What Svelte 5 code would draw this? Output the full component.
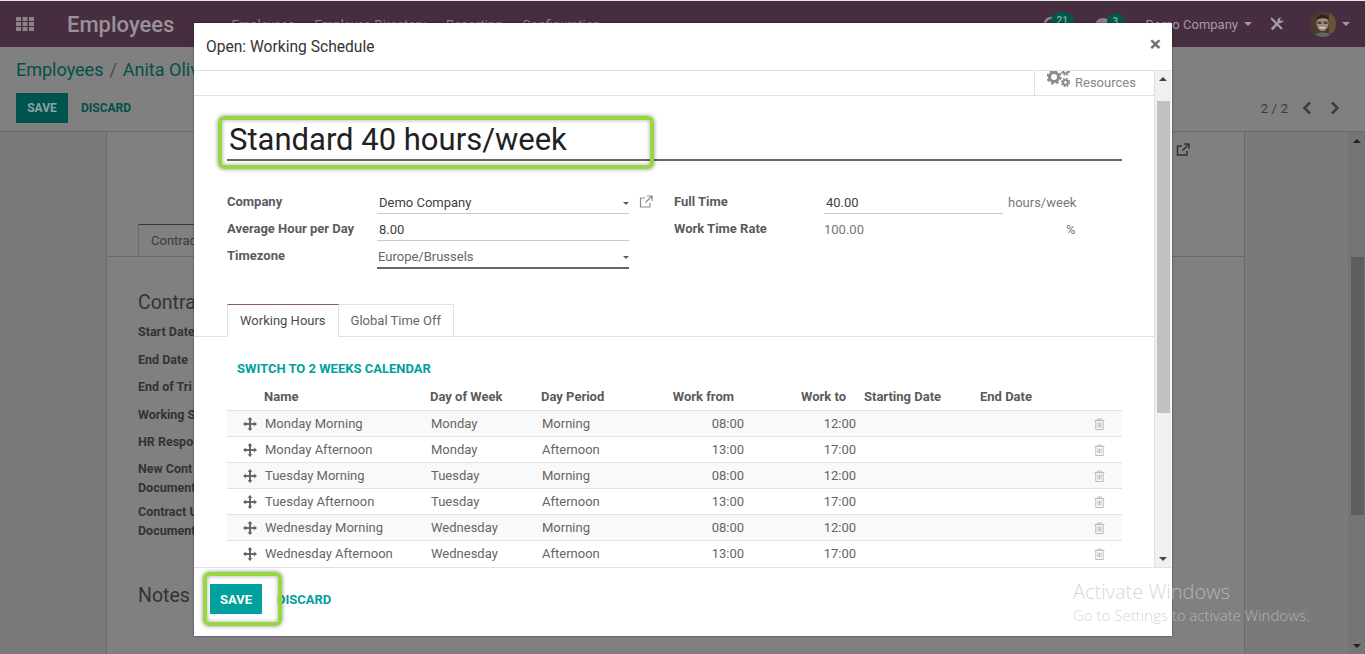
<script lang="ts">
	const rows = [
		['Monday Morning', 'Monday', 'Morning', '08:00', '12:00'],
		['Monday Afternoon', 'Monday', 'Afternoon', '13:00', '17:00'],
		['Tuesday Morning', 'Tuesday', 'Morning', '08:00', '12:00'],
		['Tuesday Afternoon', 'Tuesday', 'Afternoon', '13:00', '17:00'],
		['Wednesday Morning', 'Wednesday', 'Morning', '08:00', '12:00'],
		['Wednesday Afternoon', 'Wednesday', 'Afternoon', '13:00', '17:00']
	]
	const bgLabels = [
		['Start Date'],
		['End Date'],
		['End of Tri'],
		['Working S'],
		['HR Respo'],
		['New Cont', 'Document'],
		['Contract U', 'Document']
	]
	const menu = ['Employees', 'Employee Directory', 'Reporting', 'Configuration']
</script>

<div class="page">
	<header class="navbar">
		<svg class="apps" width="18" height="14" viewBox="0 0 18 14">
			<path d="M0 0h5v4H0zM6.500 0h5v4h-5zM13 0h5v4h-5zM0 5h5v4H0zM6.500 5h5v4h-5zM13 5h5v4h-5zM0 10h5v4H0zM6.500 10h5v4h-5zM13 10h5v4h-5z" fill="#8d8289" />
		</svg>
		<span class="brand">Employees</span>
		<nav class="menu">
			{#each menu as item}
				<span>{item}</span>
			{/each}
		</nav>
		<div class="systray">
			<span class="tray-icon">
				<svg width="14" height="16" viewBox="0 0 14 16"><circle cx="8" cy="8" r="6" fill="none" stroke="#8d8289" stroke-width="2.500" /></svg>
				<b class="badge one">21</b>
			</span>
			<span class="tray-icon chat">
				<svg width="16" height="14" viewBox="0 0 16 14"><ellipse cx="8" cy="7" rx="7.500" ry="6" fill="#8d8289" /></svg>
				<b class="badge two">3</b>
			</span>
			<span class="company">Demo Company <i class="caret"></i></span>
			<svg class="tools" width="14" height="14" viewBox="0 0 14 14">
				<path d="M5 6.500 1.500 3 .5 1.500 1.500.5 3 1.500 6.500 5 12.800 11.200 11.200 12.800z" fill="#a69ea3" />
				<path d="M.8 11.500 7.500 4.800C7 3 8 .8 10.500.5l1 .1-2 2 1.900 1.900 2-2c.3 2.300-1.800 4-3.900 3.400L2.700 13.200z" fill="#a69ea3" />
			</svg>
			<svg class="avatar" width="26" height="26" viewBox="0 0 26 26">
				<defs><clipPath id="av"><circle cx="13" cy="13" r="13" /></clipPath></defs>
				<g clip-path="url(#av)">
					<rect width="26" height="26" fill="#4a3c2c" />
					<path d="M19 0h7v22h-7z" fill="#6a5238" />
					<ellipse cx="12.500" cy="12.500" rx="6" ry="7.500" fill="#a08b7c" />
					<path d="M6.500 9C6 3 18.500 2 19 9 16 6.500 10 6.500 6.500 9z" fill="#2a2420" />
					<path d="M7.500 10.500h4v2.500h-4zM13.500 10.500h4v2.500h-4z" fill="#4a4540" />
					<path d="M9.500 16h6v1.500h-6z" fill="#d8cfc8" />
					<path d="M3 26c1-6 18-6 20 0z" fill="#5f6468" />
				</g>
			</svg>
			<i class="caret light"></i>
		</div>
	</header>

	<section class="control">
		<div class="breadcrumb"><span>Employees</span> <em>/</em> <span>Anita Oliver</span></div>
		<div class="control-row">
			<div class="bg-buttons">
				<button class="bg-save">SAVE</button>
				<span class="bg-discard">DISCARD</span>
			</div>
			<div class="pager">
				<span>2 / 2</span>
				<svg width="10" height="14" viewBox="0 0 10 14"><path d="M8 1.500 2.500 7 8 12.500" fill="none" stroke="#3f3f3f" stroke-width="2.600" /></svg>
				<svg width="10" height="14" viewBox="0 0 10 14"><path d="M2 1.500 7.500 7 2 12.500" fill="none" stroke="#3f3f3f" stroke-width="2.600" /></svg>
			</div>
		</div>
	</section>

	<main class="content">
		<div class="sheet">
			<div class="sheet-top">
				<svg class="bg-ext" width="14" height="14" viewBox="0 0 14 14"><path d="M11 8v4H1.500V3H6M8 1h5v5M13 1 6.500 7.500" fill="none" stroke="#333" stroke-width="1.500" /></svg>
			</div>
			<div class="bg-tabs"><span class="bg-tab">Contract</span></div>
			<div class="bg-form">
				<h3>Contract</h3>
				{#each bgLabels as lines}
					<div class="bg-label" class:multi={lines.length > 1}>
						{#each lines as l}<div>{l}</div>{/each}
					</div>
				{/each}
				<h3 class="notes">Notes</h3>
			</div>
		</div>
		<div class="page-scroll">
			<i class="arrow up"></i>
			<div class="page-track"><div class="page-thumb"></div></div>
			<i class="arrow down"></i>
		</div>
	</main>
</div>

<div class="modal">
	<div class="modal-head">
		<span>Open: Working Schedule</span>
		<span class="close">×</span>
	</div>
	<div class="modal-body">
		<div class="scroll-pane">
			<div class="button-box">
				<div class="stat">
					<svg class="gears" width="24" height="18" viewBox="0 0 24 18">
						<g fill="none" stroke="#8a8a8a">
							<circle cx="7" cy="6" r="4.500" stroke-width="3" />
							<circle cx="7" cy="6" r="6.500" stroke-width="2.200" stroke-dasharray="2.600 2.500" />
							<circle cx="18.500" cy="11.500" r="2.400" stroke-width="2" />
							<circle cx="18.500" cy="11.500" r="4" stroke-width="1.400" stroke-dasharray="1.700 1.450" />
							<circle cx="18.500" cy="0" r="2.400" stroke-width="2" />
							<circle cx="18.500" cy="0" r="4" stroke-width="1.400" stroke-dasharray="1.700 1.450" />
						</g>
					</svg>
					<span>Resources</span>
				</div>
			</div>
			<div class="form-body">
				<div class="title-field">Standard 40 hours/week</div>
				<div class="fields">
					<div class="field-col left">
						<div class="field-row">
							<span class="lbl">Company</span>
							<div class="val line">Demo Company <i class="caret dark"></i></div>
							<svg class="ext" width="14" height="14" viewBox="0 0 14 14"><path d="M11 8v4H1.500V3H6M8 1h5v5M13 1 6.500 7.500" fill="none" stroke="#8a8a8a" stroke-width="1.200" /></svg>
						</div>
						<div class="field-row">
							<span class="lbl">Average Hour per Day</span>
							<div class="val line">8.00</div>
						</div>
						<div class="field-row">
							<span class="lbl">Timezone</span>
							<div class="val focus">Europe/Brussels <i class="caret dark"></i></div>
						</div>
					</div>
					<div class="field-col right">
						<div class="field-row">
							<span class="lbl">Full Time</span>
							<div class="val line short">40.00</div>
							<span class="unit">hours/week</span>
						</div>
						<div class="field-row">
							<span class="lbl">Work Time Rate</span>
							<div class="val short muted">100.00</div>
							<span class="unit pct">%</span>
						</div>
					</div>
				</div>
				<div class="tabs">
					<span class="tab active">Working Hours</span>
					<span class="tab">Global Time Off</span>
				</div>
				<div class="tab-pane">
					<div class="switch">SWITCH TO 2 WEEKS CALENDAR</div>
					<div class="grid head">
						<span></span><span>Name</span><span>Day of Week</span><span>Day Period</span>
						<span class="r">Work from</span><span class="r">Work to</span><span class="start">Starting Date</span><span class="end">End Date</span><span></span>
					</div>
					{#each rows as row, i}
						<div class="grid row" class:odd={i % 2 === 0}>
							<svg class="move" width="14" height="14" viewBox="0 0 14 14">
								<path d="M7 0 9.500 2.800H8V6h3.200V4.500L14 7l-2.800 2.500V8H8v3.200h1.500L7 14l-2.500-2.800H6V8H2.800v1.500L0 7l2.800-2.500V6H6V2.800H4.500z" fill="#666" />
							</svg>
							<span>{row[0]}</span>
							<span>{row[1]}</span>
							<span>{row[2]}</span>
							<span class="r">{row[3]}</span>
							<span class="r">{row[4]}</span>
							<span></span>
							<span></span>
							<svg class="trash" width="11" height="12" viewBox="0 0 11 12">
								<path d="M.5 2.500h10M3.500 2.500V1h4v1.500M1.800 2.500v9h7.400v-9M4 4.500v5M5.500 4.500v5M7 4.500v5" fill="none" stroke="#b7bcc2" stroke-width="1" />
							</svg>
						</div>
					{/each}
				</div>
			</div>
		</div>
		<div class="modal-scroll">
			<i class="arrow up dark-arrow"></i>
			<div class="modal-track"><div class="modal-thumb"></div></div>
			<i class="arrow down dark-arrow"></i>
		</div>
	</div>
	<div class="modal-foot">
		<button class="save">SAVE</button>
		<span class="discard">DISCARD</span>
	</div>
</div>

<div class="mark mark-title"></div>
<div class="mark mark-save"></div>

<div class="watermark">
	<div class="wm-big">Activate Windows</div>
	<div class="wm-small">Go to Settings to activate Windows.</div>
</div>

<style>
	:global(body) {
		margin: 0;
		background: #808080;
		overflow: hidden;
		font-family: Roboto, 'Noto Sans', sans-serif;
	}

	.page {
		height: 654px;
		display: flex;
		flex-direction: column;
		background: #808080;
		border-top: 1px solid #e8e8e8;
		box-sizing: border-box;
		overflow: hidden;
		color: #3a3a3a;
	}

	.navbar {
		height: 46px;
		flex: none;
		background: #462e40;
		display: flex;
		align-items: center;
		padding-left: 16px;
		color: #a39aa0;
	}

	.brand {
		font-size: 22px;
		font-weight: 500;
		margin-left: 33px;
		color: #9a9298;
	}

	.menu {
		display: flex;
		gap: 20px;
		margin-left: 57px;
		font-size: 13px;
		color: #8f868c;
	}

	.systray {
		margin-left: auto;
		display: flex;
		align-items: center;
		font-size: 13px;
		padding-right: 15px;
	}

	.tray-icon {
		position: relative;
		display: flex;
		width: 14px;
		margin-right: 38px;
		color: #8d8289;
	}

	.tray-icon.chat {
		margin-right: 35px;
		width: 16px;
	}

	.badge {
		position: absolute;
		top: -4px;
		left: 8px;
		background: #00594f;
		color: #8fa9a5;
		font-size: 10px;
		font-weight: 500;
		border-radius: 10px;
		padding: 3px 6px 5px;
		line-height: 11px;
	}

	.badge.two {
		left: 12px;
	}

	.company {
		color: #a39aa0;
		display: flex;
		align-items: center;
		gap: 2px;
		margin-right: 18px;
	}

	.caret {
		display: inline-block;
		width: 0;
		height: 0;
		border-left: 4px solid transparent;
		border-right: 4px solid transparent;
		border-top: 4px solid #a39aa0;
		margin-left: 4px;
	}

	.caret.light {
		margin-left: 6px;
	}

	.caret.dark {
		position: absolute;
		right: 0;
		top: 13px;
		border-left-width: 3.500px;
		border-right-width: 3.500px;
		border-top: 3px solid #5c5c5c;
		margin: 0;
	}

	.tools {
		margin-right: 26px;
	}

	.control {
		height: 85px;
		flex: none;
		box-sizing: border-box;
		border-bottom: 1px solid #6b6b6b;
		padding: 11px 0 0 16px;
	}

	.breadcrumb {
		font-size: 18px;
		color: #00514a;
		height: 24px;
		line-height: 24px;
	}

	.breadcrumb em {
		font-style: normal;
		color: #4a4a4a;
		margin: 0 1.500px;
	}

	.control-row {
		display: flex;
		align-items: center;
		justify-content: space-between;
		margin-top: 11px;
		padding-right: 25px;
	}

	.bg-buttons {
		display: flex;
		align-items: center;
		gap: 13px;
	}

	.bg-save {
		width: 52px;
		height: 30px;
		border: 0;
		padding: 0;
		background: #00544f;
		color: #8ba5a2;
		font: 700 12px Roboto, sans-serif;
	}

	.bg-discard {
		font-size: 12px;
		font-weight: 700;
		color: #00514a;
	}

	.pager {
		display: flex;
		align-items: center;
		gap: 18px;
		font-size: 13.500px;
		color: #3c3c3c;
	}

	.pager span {
		margin-right: -4px;
	}

	.content {
		flex: 1;
		display: flex;
		min-height: 0;
		padding-left: 106px;
		background: #7a7a7a;
	}

	.sheet {
		width: 1139px;
		box-sizing: border-box;
		background: #808080;
		border-left: 1px solid #6b6b6b;
		border-right: 1px solid #6b6b6b;
		position: relative;
	}

	.sheet-top {
		height: 92px;
		display: flex;
		justify-content: flex-end;
		padding: 11px 54px 0 0;
		box-sizing: border-box;
	}

	.bg-tabs {
		height: 33px;
		box-sizing: border-box;
		border-bottom: 1px solid #6b6b6b;
		padding-left: 31px;
	}

	.bg-tab {
		display: block;
		width: 60px;
		height: 33px;
		box-sizing: border-box;
		border: 1px solid #6b6b6b;
		border-top-color: #462e40;
		border-bottom: 0;
		padding: 8px 0 0 12px;
		font-size: 13px;
		color: #3a3a3a;
	}

	.bg-form {
		padding: 34px 0 0 31px;
	}

	.bg-form h3 {
		margin: 0 0 8px;
		font-size: 19.500px;
		font-weight: 400;
		line-height: 24px;
		color: #333;
	}

	.bg-form h3.notes {
		margin-top: 44px;
	}

	.bg-label {
		font-size: 12.500px;
		font-weight: 700;
		color: #333;
		line-height: 18px;
		margin-bottom: 9.500px;
	}

	.bg-label.multi {
		line-height: 19px;
		margin-top: -2px;
		margin-bottom: 7px;
	}

	.page-scroll {
		margin-left: auto;
		width: 17px;
		background: #757575;
		display: flex;
		flex-direction: column;
		align-items: center;
	}

	.page-scroll .arrow.up {
		margin-top: 7px;
	}

	.page-track {
		flex: 1;
		width: 100%;
		padding-top: 108px;
		box-sizing: border-box;
	}

	.page-thumb {
		height: 258px;
		margin: 0 1px 0 3px;
		background: #5e5e5e;
	}

	.arrow {
		display: block;
		width: 0;
		height: 0;
		border-left: 4px solid transparent;
		border-right: 4px solid transparent;
		margin: 6px 0;
	}

	.arrow.up {
		border-bottom: 4px solid #222;
	}

	.arrow.down {
		border-top: 4px solid #222;
	}

	.arrow.dark-arrow.up {
		border-bottom-color: #444;
	}

	.arrow.dark-arrow.down {
		border-top-color: #444;
	}

	.modal {
		position: absolute;
		left: 194px;
		top: 23px;
		width: 978px;
		height: 613px;
		background: #fff;
		display: flex;
		flex-direction: column;
		box-shadow: 0 0 2px rgba(0, 0, 0, 0.5);
		color: #4c4c4c;
	}

	.modal-head {
		height: 48px;
		flex: none;
		box-sizing: border-box;
		border-bottom: 1px solid #dee2e6;
		display: flex;
		align-items: center;
		justify-content: space-between;
		padding: 0 11px 0 12px;
		font-size: 15.600px;
		color: #333;
	}

	.close {
		font-size: 21px;
		font-weight: 700;
		color: #707070;
		line-height: 1;
		margin-top: -4px;
	}

	.modal-body {
		flex: 1;
		min-height: 0;
		display: flex;
	}

	.scroll-pane {
		flex: 1;
		overflow: hidden;
	}

	.button-box {
		height: 25px;
		box-sizing: border-box;
		border-bottom: 1px solid #dee2e6;
		display: flex;
		justify-content: flex-end;
	}

	.stat {
		width: 120px;
		box-sizing: border-box;
		border-left: 1px solid #dee2e6;
		display: flex;
		align-items: flex-start;
		padding-left: 12px;
		font-size: 13px;
		color: #868686;
		gap: 4px;
		overflow: hidden;
	}

	.stat span {
		margin-top: 4px;
	}

	.form-body {
		padding-top: 27px;
	}

	.title-field {
		margin: 0 33px;
		height: 38px;
		font-size: 31px;
		line-height: 34px;
		color: #212121;
		padding-left: 2px;
		box-sizing: border-box;
		border-bottom: 2px solid #666;
		width: 895px;
	}

	.fields {
		display: flex;
		padding-left: 33px;
		margin-top: 28px;
	}

	.field-col.left {
		width: 447px;
	}

	.field-col.right {
		flex: 1;
	}

	.field-row {
		display: flex;
		height: 27px;
		align-items: flex-start;
		position: relative;
	}

	.lbl {
		width: 150px;
		flex: none;
		font-size: 13px;
		font-weight: 700;
		color: #5b5b5b;
		line-height: 16px;
		margin-top: 5px;
	}

	.val {
		position: relative;
		width: 252px;
		height: 25px;
		box-sizing: border-box;
		padding-left: 2px;
		font-size: 13px;
		line-height: 18px;
		padding-top: 5px;
		color: #3e3e3e;
	}

	.val.line {
		border-bottom: 1px solid #c9c9c9;
	}

	.val.focus {
		border-bottom: 2px solid #666;
		color: #666;
		padding-left: 1px;
		height: 26px;
	}

	.val.short {
		width: 179px;
	}

	.val.muted {
		color: #777;
		padding-left: 0;
	}

	.ext {
		margin: 6px 0 0 10px;
	}

	.unit {
		font-size: 13px;
		color: #777;
		margin-left: 5px;
		line-height: 18px;
		padding-top: 5px;
	}

	.unit.pct {
		margin-left: 63px;
	}

	.tabs {
		display: flex;
		margin-top: 34px;
		padding-left: 33px;
		height: 33px;
		box-sizing: border-box;
		border-bottom: 1px solid #dee2e6;
	}

	.tab {
		height: 33px;
		box-sizing: border-box;
		border: 1px solid #dee2e6;
		border-left: 0;
		padding: 8px 12px 0;
		font-size: 13px;
		color: #666;
	}

	.tab.active {
		border-left: 1px solid #dee2e6;
		border-top-color: #875a7b;
		border-bottom-color: #fff;
		color: #4c4c4c;
	}

	.tab-pane {
		padding: 24px 0 0 33px;
	}

	.switch {
		font-size: 13px;
		font-weight: 700;
		color: #00a09d;
		padding-left: 10px;
		line-height: 16px;
	}

	.grid {
		width: 895px;
		display: grid;
		grid-template-columns: 37px 166px 111px 110px 95px 112px 116px 116px 1fr;
		align-items: center;
		font-size: 13px;
		box-sizing: border-box;
	}

	.grid.head {
		height: 26px;
		margin-top: 7px;
		padding-bottom: 2px;
		font-weight: 700;
		color: #5b5b5b;
	}

	.grid.head .start {
		padding-left: 6px;
	}

	.grid.head .end {
		padding-left: 6px;
	}

	.grid.head .r {
		text-align: right;
		padding-right: 12px;
	}

	.grid.row {
		height: 26px;
		border-top: 1px solid #dee2e6;
		color: #666;
	}

	.grid.row.odd {
		background: #f9f9f9;
	}

	.grid.row > span {
		padding-left: 1px;
	}

	.grid.row .r {
		text-align: right;
		padding-right: 2px;
	}

	.move {
		margin-left: 16px;
	}

	.trash {
		justify-self: start;
		margin-left: 4px;
	}

	.modal-scroll {
		width: 16px;
		flex: none;
		background: #f0f0f0;
		border-left: 1px solid #dee2e6;
		display: flex;
		flex-direction: column;
		align-items: center;
		margin-right: 1px;
	}

	.modal-track {
		flex: 1;
		width: 100%;
		padding-top: 14px;
		box-sizing: border-box;
	}

	.modal-thumb {
		height: 312px;
		margin: 0 1px 0 2px;
		background: #c1c1c1;
	}

	.modal-foot {
		height: 69px;
		flex: none;
		box-sizing: border-box;
		border-top: 1px solid #dee2e6;
		display: flex;
		align-items: center;
		padding: 0 0 6px 16px;
		gap: 15px;
	}

	.save {
		width: 52px;
		height: 30px;
		border: 0;
		padding: 0;
		background: #00a09d;
		color: #fff;
		font: 700 13px Roboto, sans-serif;
	}

	.discard {
		font-size: 13px;
		font-weight: 700;
		color: #00a09d;
	}

	.mark {
		position: absolute;
		box-sizing: border-box;
		border: 4px solid #95d840;
		border-radius: 6px;
		box-shadow: 0 0 4px rgba(0, 0, 0, 0.45), inset 0 0 4px rgba(0, 0, 0, 0.35);
	}

	.mark-title {
		left: 218px;
		top: 116px;
		width: 436px;
		height: 53px;
	}

	.mark-save {
		left: 203px;
		top: 572px;
		width: 79px;
		height: 54px;
	}

	.watermark {
		position: absolute;
		left: 1073px;
		top: 580px;
		font-family: 'Open Sans', sans-serif;
		color: rgba(200, 200, 200, 0.75);
		pointer-events: none;
	}

	.wm-big {
		font-size: 20px;
		line-height: 24px;
		font-weight: 300;
	}

	.wm-small {
		font-size: 15px;
		line-height: 22px;
		font-weight: 300;
	}
</style>
